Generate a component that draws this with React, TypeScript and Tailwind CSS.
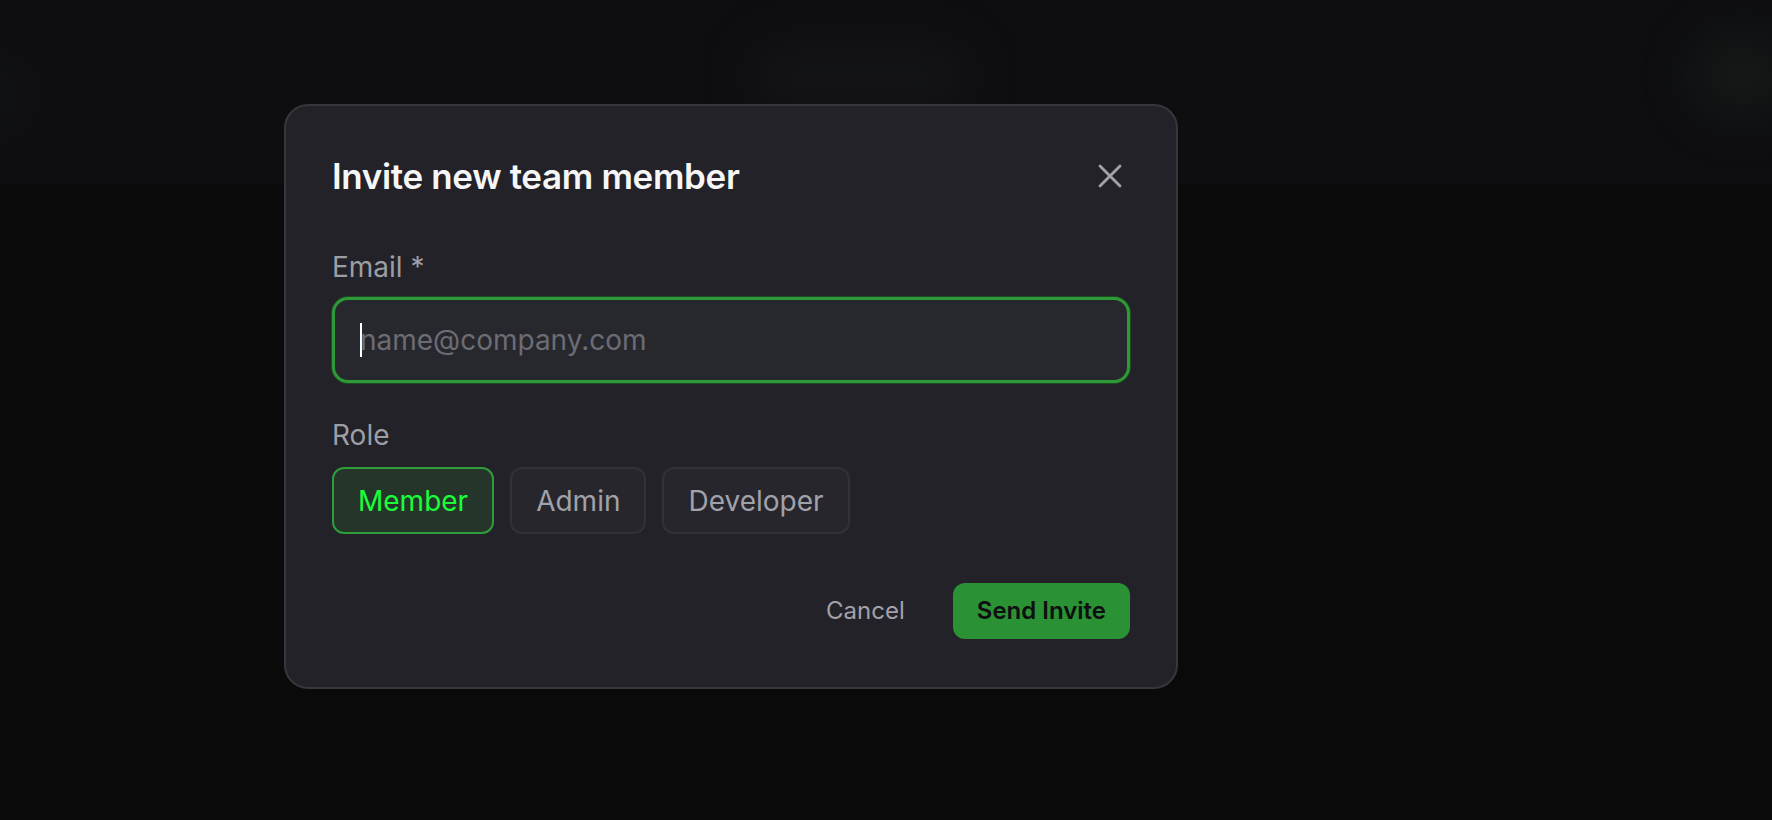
export default function App() {
  return (
    <div className="relative min-h-screen w-full overflow-hidden bg-[#0a0a0a] font-['Inter',sans-serif]">
      {/* page behind the overlay */}
      <div className="h-[184px] w-full bg-[#0e0e11]" />
      <div className="absolute left-[-40px] top-[60px] h-[70px] w-[70px] rounded-full bg-[#1c201d] opacity-30 blur-xl" />
      <div className="absolute left-[750px] top-[45px] h-[65px] w-[220px] rounded-full bg-[#1a1b1f] opacity-50 blur-xl" />
      <div className="absolute right-[-20px] top-[35px] h-[80px] w-[100px] rounded-full bg-[#1a241c] opacity-50 blur-xl" />

      {/* Dialog */}
      <div className="absolute left-[284px] top-[104px] w-[894px] rounded-[24px] border-2 border-[#36363d] bg-[#222228] px-[46px] pb-[48px] pt-[46px]">
        <div className="flex h-12 items-center justify-between">
          <h2 className="text-[35px] font-semibold leading-[48px] tracking-[-0.01em] text-[#f6f6f7]">Invite new team member</h2>
          <button className="-mr-1 flex h-12 w-12 items-center justify-center text-[#a1a1aa]">
            <svg width="24" height="24" viewBox="0 0 24 24" fill="none" stroke="currentColor" strokeWidth="2.75" strokeLinecap="round">
              <path d="M2 2 22 22" />
              <path d="M22 2 2 22" />
            </svg>
          </button>
        </div>

        <label className="mt-[47px] block text-[28px] leading-[40px] text-[#9d9da5]">Email *</label>
        <div className="mt-[10px] flex h-[86px] items-center rounded-[16px] border-[3px] border-[#2e9a37] bg-[#27282d] px-[25px] shadow-[0_0_0_1px_#1f4a24]">
          <span className="mr-[-2px] h-[34px] w-[2px] bg-white" />
          <span className="text-[28px] text-[#6c6c74]">name@company.com</span>
        </div>

        <label className="mt-[32px] block text-[28px] leading-[40px] text-[#9d9da5]">Role</label>
        <div className="mt-[12px] flex gap-4">
          <button className="h-[67px] rounded-[12px] border-2 border-[#2f9c3a] bg-[#26352a] px-6 text-[28px] text-[#18ff3a]">Member</button>
          <button className="h-[67px] rounded-[12px] border-2 border-[#313137] bg-[#26262c] px-6 text-[28px] text-[#a1a1aa]">Admin</button>
          <button className="h-[67px] rounded-[12px] border-2 border-[#313137] bg-[#26262c] px-6 text-[28px] text-[#a1a1aa]">Developer</button>
        </div>

        <div className="mt-[49px] flex items-center justify-end gap-6">
          <button className="h-14 px-6 text-[24px] text-[#a1a1aa]">Cancel</button>
          <button className="h-14 rounded-[12px] bg-[#2b9135] px-6 text-[24px] font-semibold text-[#0f0f10]">Send Invite</button>
        </div>
      </div>
    </div>
  );
}
